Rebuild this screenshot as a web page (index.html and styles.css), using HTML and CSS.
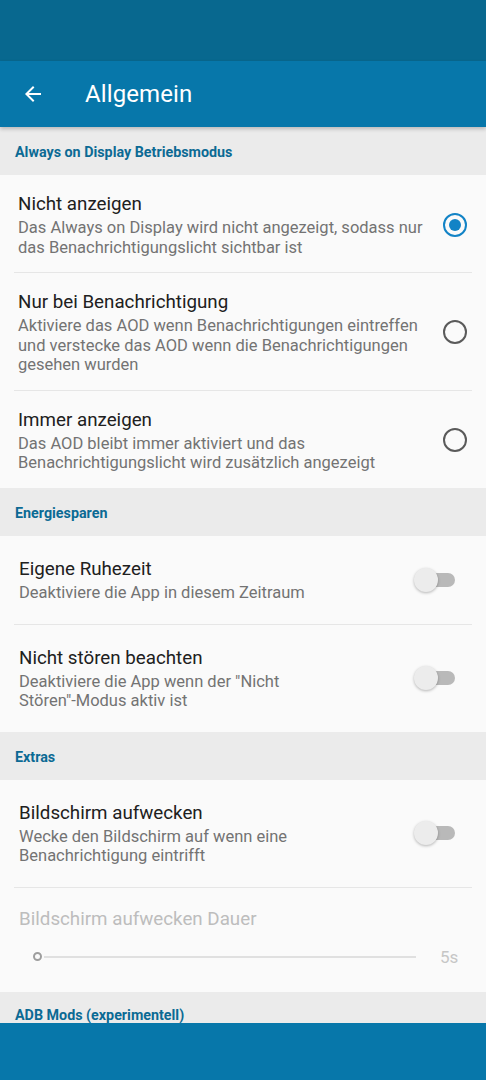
FILE: index.html
```html
<!DOCTYPE html>
<html lang="de">
<head>
<meta charset="utf-8">
<link rel="stylesheet" href="styles.css">
</head>
<body>
<div class="screen">
  <div class="statusbar"></div>
  <header class="toolbar">
    <svg class="back" width="24" height="24" viewBox="0 0 24 24"><path d="M20 11H7.83l5.59-5.59L12 4l-8 8 8 8 1.41-1.41L7.83 13H20v-2z" fill="#fff"/></svg>
    <h1 class="title">Allgemein</h1>
  </header>
  <main class="content">
    <div class="cat">Always on Display Betriebsmodus</div>
    <div class="pref radio-pref">
      <div class="text">
        <div class="ptitle">Nicht anzeigen</div>
        <div class="psum">Das Always on Display wird nicht angezeigt, sodass nur das Benachrichtigungslicht sichtbar ist</div>
      </div>
      <span class="radio checked"></span>
    </div>
    <div class="divider"></div>
    <div class="pref radio-pref">
      <div class="text">
        <div class="ptitle">Nur bei Benachrichtigung</div>
        <div class="psum">Aktiviere das AOD wenn Benachrichtigungen eintreffen und verstecke das AOD wenn die Benachrichtigungen gesehen wurden</div>
      </div>
      <span class="radio"></span>
    </div>
    <div class="divider"></div>
    <div class="pref radio-pref">
      <div class="text">
        <div class="ptitle">Immer anzeigen</div>
        <div class="psum">Das AOD bleibt immer aktiviert und das Benachrichtigungslicht wird zusätzlich angezeigt</div>
      </div>
      <span class="radio"></span>
    </div>

    <div class="cat">Energiesparen</div>
    <div class="pref switch-pref">
      <div class="text">
        <div class="ptitle">Eigene Ruhezeit</div>
        <div class="psum">Deaktiviere die App in diesem Zeitraum</div>
      </div>
      <span class="switch"><span class="thumb"></span></span>
    </div>
    <div class="divider"></div>
    <div class="pref switch-pref">
      <div class="text narrow">
        <div class="ptitle">Nicht stören beachten</div>
        <div class="psum">Deaktiviere die App wenn der "Nicht Stören"-Modus aktiv ist</div>
      </div>
      <span class="switch"><span class="thumb"></span></span>
    </div>

    <div class="cat">Extras</div>
    <div class="pref switch-pref">
      <div class="text narrow">
        <div class="ptitle">Bildschirm aufwecken</div>
        <div class="psum">Wecke den Bildschirm auf wenn eine Benachrichtigung eintrifft</div>
      </div>
      <span class="switch"><span class="thumb"></span></span>
    </div>
    <div class="divider"></div>
    <div class="pref slider-pref">
      <div class="ptitle disabled">Bildschirm aufwecken Dauer</div>
      <div class="slider-row">
        <span class="slider-thumb"></span>
        <span class="slider-track"></span>
        <span class="slider-val">5s</span>
      </div>
    </div>

    <div class="cat last">ADB Mods (experimentell)</div>
  </main>
  <div class="navbar"></div>
</div>
</body>
</html>
```

FILE: styles.css
```css
* { box-sizing: border-box; }
html, body { margin: 0; padding: 0; }
body {
  font-family: Roboto, "Noto Sans", "Liberation Sans", sans-serif;
  background: #fafafa;
}
.screen {
  width: 486px;
  height: 1080px;
  display: flex;
  flex-direction: column;
  overflow: hidden;
  position: relative;
}
.statusbar {
  height: 61px;
  background: #08688f;
  flex: none;
}
.toolbar {
  height: 66px;
  background: #0777aa;
  flex: none;
  display: flex;
  align-items: center;
  padding-left: 21px;
  position: relative;
  z-index: 2;
  box-shadow: 0 2px 4px rgba(0,0,0,0.22);
}
.back { flex: none; }
.title {
  margin: 0 0 0 40px;
  font-size: 24px;
  font-weight: 400;
  color: #fff;
  letter-spacing: 0.1px;
}
.content {
  flex: 1;
  overflow: hidden;
  background: #fafafa;
}
.cat {
  height: 48px;
  background: #ebebeb;
  color: #0b6a94;
  font-size: 14.3px;
  font-weight: 700;
  display: flex;
  align-items: center;
  padding: 2px 0 0 15px;
}
.cat.last { height: 46px; padding-top: 0; line-height: 16px; }
.pref {
  display: flex;
  align-items: center;
}
.radio-pref {
  padding: 17px 0 15px 18px;
}
.switch-pref {
  padding: 21px 0 21px 19px;
  min-height: 88px;
}
.text { flex: 1; padding-right: 14px; }
.switch-pref .text { padding-right: 60px; }
.switch-pref .text.narrow { padding-right: 90px; }
.ptitle {
  font-size: 18.75px;
  line-height: 24px;
  color: #202020;
}
.psum {
  margin-top: 2px;
  font-size: 16.5px;
  line-height: 19.5px;
  color: #737373;
}
.divider {
  height: 1px;
  background: #e6e6e6;
  margin: 0 14px;
}
.radio {
  flex: none;
  width: 24px;
  height: 24px;
  border-radius: 50%;
  border: 2px solid #5a5a5a;
  margin-right: 19px;
  position: relative;
}
.radio.checked { border-color: #1283c6; }
.radio.checked::after {
  content: "";
  position: absolute;
  left: 4px; top: 4px;
  width: 12px; height: 12px;
  border-radius: 50%;
  background: #1283c6;
}
.switch {
  flex: none;
  width: 38px;
  height: 14px;
  border-radius: 7px;
  background: #b9b9b9;
  margin-right: 31px;
  position: relative;
}
.switch .thumb {
  position: absolute;
  left: -3px;
  top: -5px;
  width: 24px;
  height: 24px;
  border-radius: 50%;
  background: #ececec;
  box-shadow: 0 1px 3px rgba(0,0,0,0.28);
}
.slider-pref {
  display: block;
  padding: 19px 0 0 19px;
  height: 104px;
}
.ptitle.disabled { color: #bdbdbd; }
.slider-row {
  display: flex;
  align-items: center;
  margin-top: 16px;
  padding-left: 14px;
}
.slider-thumb {
  flex: none;
  width: 9px;
  height: 9px;
  border-radius: 50%;
  border: 2px solid #9e9e9e;
  background: #fafafa;
}
.slider-track {
  flex: none;
  width: 372px;
  height: 2px;
  background: #e0e0e0;
  margin-left: 2px;
}
.slider-val {
  margin-left: 24px;
  font-size: 17px;
  color: #c6c6c6;
}
.navbar {
  height: 57px;
  background: #0777aa;
  flex: none;
}
```
